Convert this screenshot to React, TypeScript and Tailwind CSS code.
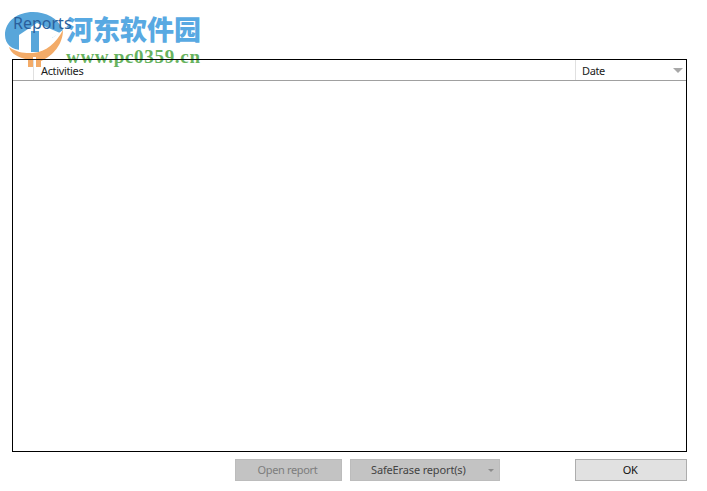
function WatermarkLogo() {
  return (
    <svg width="70" height="70" viewBox="0 0 70 70" className="absolute left-0 top-0">
      {/* blue ball */}
      <path d="M5 35C5 21 18 12 33 12c13 0 25 6 30 18L52 38v12H22C12 50 5 44 5 35Z" fill="#58a6da" />
      {/* white house with blue door */}
      <path d="M13 39 37 23l23 10-8 5v14H19V35Z" fill="#fff" />
      <path d="M31 31h8v21h-8Z" fill="#58a6da" />
      {/* orange swoosh and stems */}
      <path d="M9 47c7 5 14 6 20 6h4c13-1 23-10 30-23 0 14-10 26-22 31v6H28v-7C18 57 11 54 9 47Z" fill="#f3ab68" />
      <path d="M33 57h3v10h-3Z" fill="#fff" />
    </svg>
  );
}

export default function App() {
  return (
    <div className="relative w-[707px] h-[491px] bg-white overflow-hidden font-['Noto_Sans',sans-serif] text-[11px] tracking-[-0.35px] text-[#1a1a1a]">
      <WatermarkLogo />
      <div className="absolute left-[66px] top-[13px] font-['Noto_Sans_CJK_SC',sans-serif] font-black text-[27px] leading-[32px] tracking-[0px] text-[#58a9e2]">河东软件园</div>
      <div className="absolute left-[66px] top-[48px] font-['Liberation_Serif',serif] font-bold text-[19px] leading-[18px] tracking-[0.7px] text-[#68b35f]">www.pc0359.cn</div>

      <div className="relative">
        <div className="h-[59px] pl-[13px] pt-[12px] text-[16px] leading-[22px] tracking-normal text-[#2a5f9c]">Reports</div>

        <div className="ml-[12px] w-[675px] h-[393px] border border-black flex flex-col">
          <div className="h-[21px] flex border-b border-[#a0a0a0]">
            <div className="w-[21px] border-r border-[#e0e0e0]" />
            <div className="flex-1 pl-[7px] pt-[1px] leading-[20px] border-r border-[#e0e0e0]">Activities</div>
            <div className="w-[110px] pl-[6px] pr-[3px] pt-[1px] leading-[20px] flex items-center justify-between">
              <span>Date</span>
              <span className="w-0 h-0 border-x-[5px] border-x-transparent border-t-[5px] border-t-[#a8a8a8]" />
            </div>
          </div>
          <div className="flex-1" />
        </div>

        <div className="mt-[7px] pl-[235px] flex">
          <button className="w-[107px] h-[22px] pr-[2px] bg-[#c3c3c3] text-[#7d7d7d] border border-[#bcbcbc]">Open report</button>
          <button className="ml-[8px] w-[150px] h-[22px] pl-[20px] pr-[5px] tracking-[-0.15px] bg-[#c3c3c3] text-[#444444] border border-[#bcbcbc] flex items-center justify-between">
            <span>SafeErase report(s)</span>
            <span className="w-0 h-0 border-x-[3px] border-x-transparent border-t-[3px] border-t-[#8c8c8c]" />
          </button>
          <button className="ml-[75px] w-[112px] h-[22px] pr-[2px] bg-[#e1e1e1] text-[#111111] border border-[#adadad]">OK</button>
        </div>
      </div>
    </div>
  );
}
